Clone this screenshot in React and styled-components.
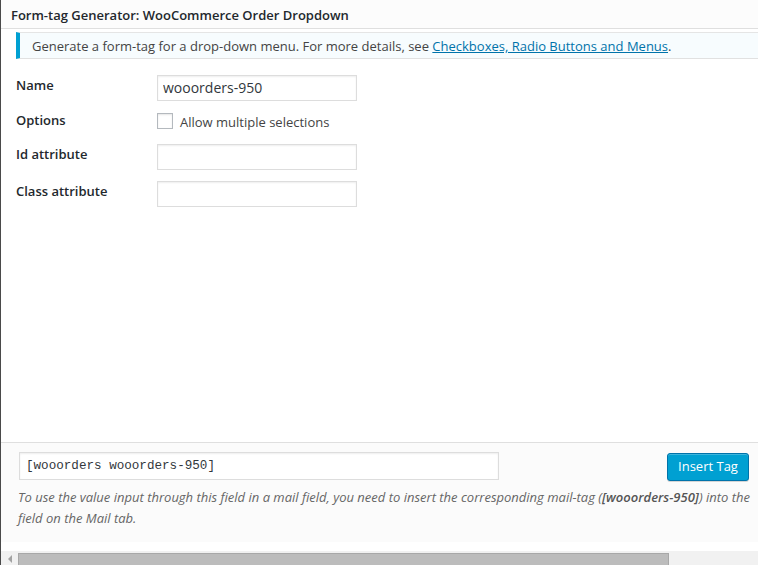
import React from 'react';
import styled, { createGlobalStyle } from 'styled-components';

const GlobalStyle = createGlobalStyle`
  html, body {
    margin: 0;
    padding: 0;
    background: #fff;
  }
  body {
    font-family: "Open Sans", "Noto Sans", sans-serif;
    font-size: 13px;
    color: #444;
  }
`;

const fields = [
  { label: 'Name', kind: 'text', value: 'wooorders-950' },
  { label: 'Options', kind: 'check', text: 'Allow multiple selections' },
  { label: 'Id attribute', kind: 'text', value: '' },
  { label: 'Class attribute', kind: 'text', value: '' },
];

const App = () => {
  return (
    <>
      <GlobalStyle />
      <Page>
        <Header>Form-tag Generator: WooCommerce Order Dropdown</Header>
        <Body>
          <Notice>
            Generate a form-tag for a drop-down menu. For more details, see{' '}
            <NoticeLink href="#">Checkboxes, Radio Buttons and Menus</NoticeLink>.
          </Notice>
          <FormTable>
            {fields.map((f) => (
              <Row key={f.label} $check={f.kind === 'check'}>
                <Label $check={f.kind === 'check'}>{f.label}</Label>
                {f.kind === 'text' ? (
                  <Field type="text" defaultValue={f.value} />
                ) : (
                  <CheckLine>
                    <CheckBox type="checkbox" />
                    <CheckText>{f.text}</CheckText>
                  </CheckLine>
                )}
              </Row>
            ))}
          </FormTable>
        </Body>
        <Footer>
          <InsertRow>
            <TagField type="text" readOnly value="[wooorders wooorders-950]" />
            <InsertButton type="button">Insert Tag</InsertButton>
          </InsertRow>
          <Hint>
            To use the value input through this field in a mail field, you need to insert the
            corresponding mail-tag (<strong>[wooorders-950]</strong>) into the field on the Mail tab.
          </Hint>
        </Footer>
        <Gap />
        <ScrollBar>
          <ScrollArrow>
            <svg width="5" height="8" viewBox="0 0 5 8">
              <path d="M4 0 L0 4 L4 8 Z" fill="#a3a3a3" />
            </svg>
          </ScrollArrow>
          <ScrollThumb />
        </ScrollBar>
      </Page>
    </>
  );
};

const Page = styled.div`
  width: 758px;
  height: 565px;
  display: flex;
  flex-direction: column;
  border-left: 1px solid #4a4a4a;
  box-sizing: border-box;
  overflow: hidden;
  background: #fff;
`;

const Header = styled.div`
  height: 29px;
  flex-shrink: 0;
  box-sizing: border-box;
  padding: 6px 0 0 10px;
  background: #fcfcfc;
  border-bottom: 1px solid #dfdfdf;
  font-size: 13px;
  font-weight: 600;
  line-height: 18px;
  color: #23282d;
`;

const Body = styled.div`
  flex: 1;
  padding: 3px 0 0 15px;
`;

const Notice = styled.div`
  height: 27px;
  box-sizing: border-box;
  margin-right: -20px;
  padding: 4px 0 0 12px;
  background: #f7fcfe;
  border-top: 1px solid #e5e5e5;
  border-bottom: 1px solid #e1e1e1;
  border-left: 4px solid #00a0d2;
  line-height: 18px;
  color: #444;
  white-space: nowrap;
`;

const NoticeLink = styled.a`
  color: #0073aa;
  text-decoration: underline;
`;

const FormTable = styled.div`
  display: flex;
  flex-direction: column;
  margin-top: 11px;
`;

const Row = styled.div`
  display: grid;
  grid-template-columns: 141px 200px;
  align-items: start;
  height: ${(p) => (p.$check ? '32px' : '37px')};
  padding-top: ${(p) => (p.$check ? '6px' : '5px')};
  box-sizing: border-box;
`;

const Label = styled.div`
  margin-top: ${(p) => (p.$check ? '-2px' : '1px')};
  font-weight: 600;
  line-height: 18px;
  color: #23282d;
`;

const Field = styled.input`
  width: 200px;
  height: 26px;
  box-sizing: border-box;
  margin: 0;
  padding: 2px 5px 3px;
  border: 1px solid #ddd;
  box-shadow: inset 0 1px 2px rgba(0, 0, 0, 0.07);
  font-family: "Open Sans", "Noto Sans", sans-serif;
  font-size: 14px;
  color: #32373c;
  outline: none;
`;

const CheckLine = styled.label`
  display: flex;
  align-items: center;
  gap: 7px;
  height: 16px;
`;

const CheckBox = styled.input`
  appearance: none;
  width: 16px;
  height: 16px;
  margin: 0;
  border: 1px solid #b4b9be;
  background: #fff;
  box-shadow: inset 0 1px 2px rgba(0, 0, 0, 0.1);
  box-sizing: border-box;
`;

const CheckText = styled.span`
  padding-top: 2px;
  color: #444;
  line-height: 18px;
`;

const Footer = styled.div`
  height: 100px;
  flex-shrink: 0;
  box-sizing: border-box;
  padding: 9px 9px 0 17px;
  background: #fbfbfb;
  border-top: 1px solid #dfdfdf;
`;

const InsertRow = styled.div`
  display: flex;
  align-items: flex-start;
  justify-content: space-between;
`;

const TagField = styled.input`
  width: 480px;
  height: 28px;
  margin: 0 0 0 1px;
  box-sizing: border-box;
  padding: 0 6px;
  border: 1px solid #ddd;
  background: #fff;
  box-shadow: inset 0 1px 2px rgba(0, 0, 0, 0.07);
  font-family: "Liberation Mono", "DejaVu Sans Mono", monospace;
  font-size: 12.6px;
  color: #32373c;
  outline: none;
`;

const InsertButton = styled.button`
  width: 82px;
  height: 28px;
  margin-top: 1px;
  padding: 0 10px 2px;
  background: #00a0d2;
  border: 1px solid #0073aa;
  border-radius: 3px;
  box-shadow: inset 0 1px 0 rgba(120, 200, 230, 0.5), 0 1px 0 rgba(0, 0, 0, 0.15);
  font-family: "Open Sans", "Noto Sans", sans-serif;
  font-size: 13px;
  color: #fff;
  cursor: pointer;
`;

const Hint = styled.p`
  margin: 6px -4px 0 0;
  font-style: italic;
  font-size: 13px;
  line-height: 21px;
  color: #666;

  strong {
    font-weight: 600;
    color: #555;
  }
`;

const Gap = styled.div`
  height: 9px;
  flex-shrink: 0;
  background: #fff;
`;

const ScrollBar = styled.div`
  height: 14px;
  flex-shrink: 0;
  display: flex;
  align-items: flex-start;
  background: #f1f1f1;
`;

const ScrollArrow = styled.div`
  width: 17px;
  display: flex;
  justify-content: center;
  padding-top: 4px;
  padding-left: 1px;
  box-sizing: border-box;
`;

const ScrollThumb = styled.div`
  width: 651px;
  height: 20px;
  margin-top: 2px;
  background: #bcbcbc;
  border: 1px solid #a8a8a8;
  box-sizing: border-box;
`;

export default App;
